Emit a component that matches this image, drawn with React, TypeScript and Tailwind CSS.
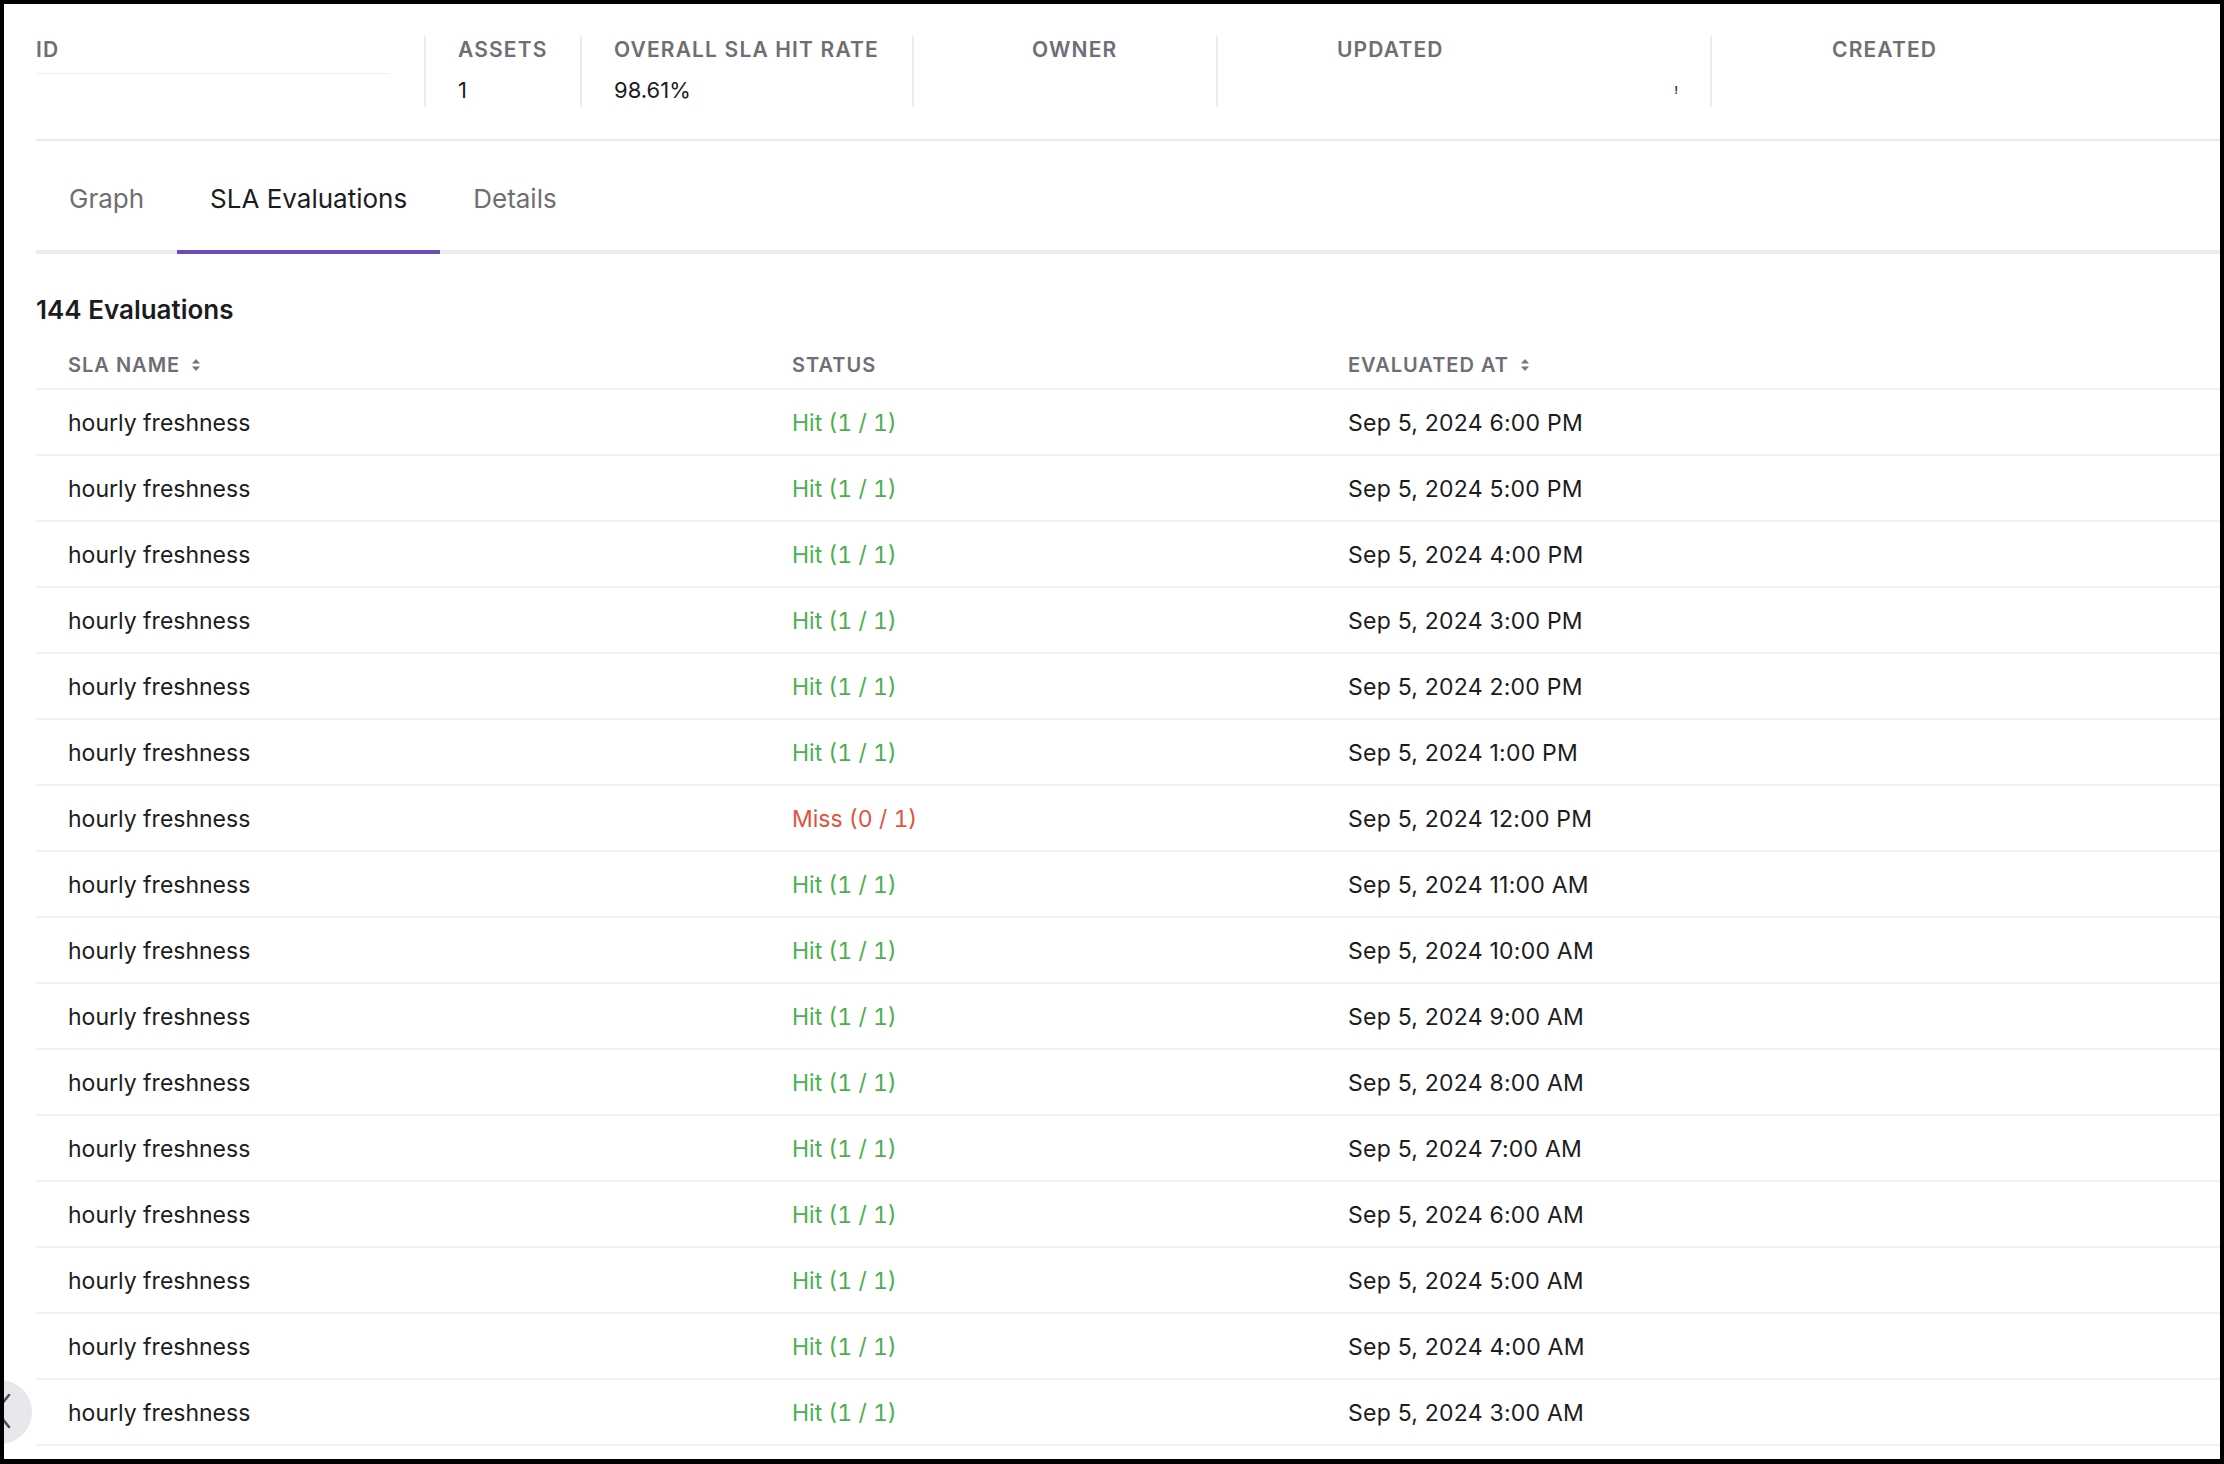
import React from 'react';

type Evaluation = {
  name: string;
  hit: boolean;
  passed: number;
  total: number;
  evaluatedAt: string;
};

const hours = [
  '6:00 PM',
  '5:00 PM',
  '4:00 PM',
  '3:00 PM',
  '2:00 PM',
  '1:00 PM',
  '12:00 PM',
  '11:00 AM',
  '10:00 AM',
  '9:00 AM',
  '8:00 AM',
  '7:00 AM',
  '6:00 AM',
  '5:00 AM',
  '4:00 AM',
  '3:00 AM',
  '2:00 AM',
];

const evaluations: Evaluation[] = hours.map(h => ({
  name: 'hourly freshness',
  hit: h !== '12:00 PM',
  passed: h === '12:00 PM' ? 0 : 1,
  total: 1,
  evaluatedAt: `Sep 5, 2024 ${h}`,
}));

function SortIcon() {
  return (
    <svg width="10" height="14" viewBox="0 0 10 14" className="shrink-0">
      <path d="M5 1 L9 5.5 H1 Z" fill="#76767d" />
      <path d="M5 13 L9 8.5 H1 Z" fill="#76767d" />
    </svg>
  );
}

function MetaColumn({
  label,
  value,
  className,
}: {
  label: string;
  value?: React.ReactNode;
  className: string;
}) {
  return (
    <div className={`border-l-2 border-[#ececf0] pb-[2px] ${className}`}>
      <div className="text-[21px] leading-[28px] font-semibold uppercase tracking-[0.055em] text-[#6e6e76] whitespace-nowrap">
        {label}
      </div>
      <div className="mt-[11px] h-[30px] text-[22px] leading-[30px] text-[#1c1c1e] whitespace-nowrap">
        {value}
      </div>
    </div>
  );
}

export default function App() {
  const tabs = ['Graph', 'SLA Evaluations', 'Details'];
  const activeTab = 'SLA Evaluations';

  return (
    <div
      className="h-screen w-full bg-black pt-[4px] px-[4px] pb-[5px]"
      style={{ fontFamily: 'Inter, "Noto Sans", "Liberation Sans", sans-serif' }}
    >
      <div className="relative h-full w-full overflow-hidden bg-white">
        <div className="pl-[32px] pt-[32px]">
          {/* asset group meta */}
          <div className="flex pb-[32px] border-b-2 border-[#e9e9ef]">
            <div className="w-[388px] shrink-0 pr-[34px]">
              <div className="text-[21px] leading-[28px] font-semibold uppercase tracking-[0.055em] text-[#6e6e76]">
                ID
              </div>
              <div className="mt-[9px] border-t border-[#efeff3]" />
            </div>
            <MetaColumn label="Assets" value="1" className="w-[156px] shrink-0 pl-[32px]" />
            <MetaColumn
              label="Overall SLA hit rate"
              value="98.61%"
              className="w-[332px] shrink-0 pl-[32px]"
            />
            <MetaColumn label="Owner" className="w-[304px] shrink-0 pl-[118px]" />
            <MetaColumn
              label="Updated"
              value={
                <div className="flex justify-end pr-[32px]">
                  <span className="text-[10px] leading-[30px] font-bold text-[#333]">!</span>
                </div>
              }
              className="w-[494px] shrink-0 pl-[119px]"
            />
            <MetaColumn label="Created" className="flex-1 pl-[120px]" />
          </div>

          {/* tabs */}
          <div className="flex border-b-4 border-[#ebebf0]">
            {tabs.map(tab => (
              <button
                key={tab}
                className={`px-[33px] pt-[42px] pb-[35px] -mb-[4px] border-b-4 text-[26px] leading-[32px] ${
                  tab === activeTab
                    ? 'border-[#6b4fb8] text-[#1c1c1e]'
                    : 'border-transparent text-[#6e6e73]'
                }`}
              >
                {tab}
              </button>
            ))}
          </div>

          <h2 className="mt-[40px] text-[26px] leading-[32px] font-semibold text-[#1c1c1e]">
            144 Evaluations
          </h2>

          {/* evaluations table */}
          <div className="text-[23px]">
            <div className="grid grid-cols-[724px_556px_1fr] pt-[25px] pb-[9px] border-b-2 border-[#f0f0f4]">
              <div className="px-[32px] flex items-center gap-[11px] text-[20px] leading-[28px] font-semibold tracking-[0.05em] text-[#6e6e76]">
                SLA NAME <SortIcon />
              </div>
              <div className="px-[32px] text-[20px] leading-[28px] font-semibold tracking-[0.05em] text-[#6e6e76]">
                STATUS
              </div>
              <div className="px-[32px] flex items-center gap-[11px] text-[20px] leading-[28px] font-semibold tracking-[0.05em] text-[#6e6e76]">
                EVALUATED AT <SortIcon />
              </div>
            </div>
            {evaluations.map((e, i) => (
              <div
                key={i}
                className="grid grid-cols-[724px_556px_1fr] h-[66px] pt-[2px] items-center border-b-2 border-[#f0f0f4]"
              >
                <div className="px-[32px] text-[#1c1c1e] whitespace-nowrap">{e.name}</div>
                <div
                  className={`px-[32px] whitespace-nowrap tabular-nums ${
                    e.hit ? 'text-[#4caf50]' : 'text-[#e0533f]'
                  }`}
                >
                  {e.hit ? 'Hit' : 'Miss'} ({e.passed} / {e.total})
                </div>
                <div className="px-[32px] text-[#1c1c1e] whitespace-nowrap tracking-[0.01em]">
                  {e.evaluatedAt}
                </div>
              </div>
            ))}
          </div>
        </div>

        {/* collapsed sidebar toggle */}
        <div className="absolute left-[-36px] bottom-[15px] h-[64px] w-[64px] rounded-full bg-[#e7e7ec]">
          <svg width="64" height="64" viewBox="0 0 64 64">
            <path
              d="M41 15 L28 31 L41 47"
              fill="none"
              stroke="#4b4b50"
              strokeWidth="2.5"
              strokeLinecap="round"
              strokeLinejoin="round"
            />
          </svg>
        </div>
      </div>
    </div>
  );
}
